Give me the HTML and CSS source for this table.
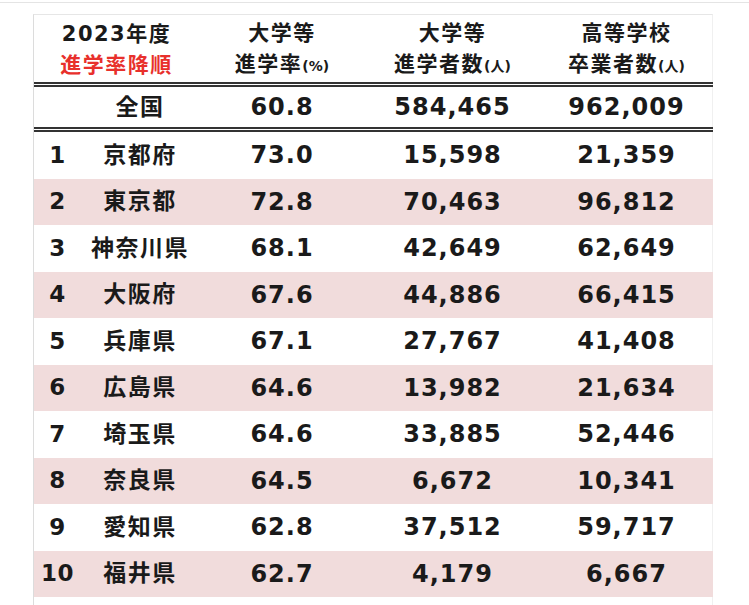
FILE: index.html
```html
<!DOCTYPE html>
<html lang="ja">
<head>
<meta charset="utf-8">
<title>大学等進学率</title>
<link rel="stylesheet" href="styles.css">
</head>
<body>
<div class="topline"></div>
<div class="sheet">
  <table class="rank-table">
    <colgroup>
      <col class="c-rank"><col class="c-name"><col class="c-rate"><col class="c-adv"><col class="c-grad">
    </colgroup>
    <thead>
      <tr class="head">
        <th colspan="2"><span class="l1">2023年度</span><span class="l2 red">進学率降順</span></th>
        <th><span class="l1">大学等</span><span class="l2">進学率<small>(%)</small></span></th>
        <th><span class="l1">大学等</span><span class="l2">進学者数<small>(人)</small></span></th>
        <th><span class="l1">高等学校</span><span class="l2">卒業者数<small>(人)</small></span></th>
      </tr>
    </thead>
    <tbody>
      <tr class="nation"><td></td><td class="name">全国</td><td>60.8</td><td>584,465</td><td>962,009</td></tr>
      <tr><td class="rk">1</td><td class="name">京都府</td><td>73.0</td><td>15,598</td><td>21,359</td></tr>
      <tr class="pink"><td class="rk">2</td><td class="name">東京都</td><td>72.8</td><td>70,463</td><td>96,812</td></tr>
      <tr><td class="rk">3</td><td class="name">神奈川県</td><td>68.1</td><td>42,649</td><td>62,649</td></tr>
      <tr class="pink"><td class="rk">4</td><td class="name">大阪府</td><td>67.6</td><td>44,886</td><td>66,415</td></tr>
      <tr><td class="rk">5</td><td class="name">兵庫県</td><td>67.1</td><td>27,767</td><td>41,408</td></tr>
      <tr class="pink"><td class="rk">6</td><td class="name">広島県</td><td>64.6</td><td>13,982</td><td>21,634</td></tr>
      <tr><td class="rk">7</td><td class="name">埼玉県</td><td>64.6</td><td>33,885</td><td>52,446</td></tr>
      <tr class="pink"><td class="rk">8</td><td class="name">奈良県</td><td>64.5</td><td>6,672</td><td>10,341</td></tr>
      <tr><td class="rk">9</td><td class="name">愛知県</td><td>62.8</td><td>37,512</td><td>59,717</td></tr>
      <tr class="pink"><td class="rk">10</td><td class="name">福井県</td><td>62.7</td><td>4,179</td><td>6,667</td></tr>
    </tbody>
  </table>
</div>
</body>
</html>
```

FILE: styles.css
```css
html, body {
  margin: 0;
  padding: 0;
  background: #ffffff;
}

body {
  font-family: "DejaVu Sans", "Noto Sans CJK JP", sans-serif;
  color: #1a1a1a;
  height: 605px;
  overflow: hidden;
}

.topline {
  margin-top: 2px;
  height: 1px;
  background: #e4e4e4;
}

.sheet {
  margin: 11px 0 0 33px;
  width: 680px;
  height: 600px;
  border-left: 1px solid #dcdcdc;
  border-top: 1px solid #e6e6e6;
  border-right: 1px solid #f0f0f0;
  box-sizing: border-box;
}

.rank-table {
  border-collapse: collapse;
  width: 679px;
  table-layout: fixed;
}

.c-rank { width: 47px; }
.c-name { width: 118px; }
.c-rate { width: 166px; }
.c-adv { width: 175px; }
.c-grad { width: 173px; }

.head th {
  height: 63px;
  padding: 3px 0 0;
  box-sizing: border-box;
  font-weight: bold;
  font-size: 21px;
  letter-spacing: 1.5px;
  text-align: center;
  vertical-align: middle;
  border-bottom: 5px double #333;
}

.head .l1,
.head .l2 {
  display: block;
  line-height: 31px;
}

.head small {
  font-size: 14px;
  letter-spacing: 0;
}

.red {
  color: #e8302c;
}

tbody td {
  padding: 0;
  height: 46.5px;
  font-size: 24px;
  font-weight: bold;
  letter-spacing: 1px;
  text-align: center;
  vertical-align: middle;
  line-height: 1;
}

tbody .nation td {
  height: 40px;
  border-bottom: 5px double #333;
}

td.name {
  font-size: 23px;
  letter-spacing: 1.5px;
}

td.rk {
  font-size: 23px;
  letter-spacing: 0.5px;
}

tr.pink td {
  background: #f1dcdc;
}
```
